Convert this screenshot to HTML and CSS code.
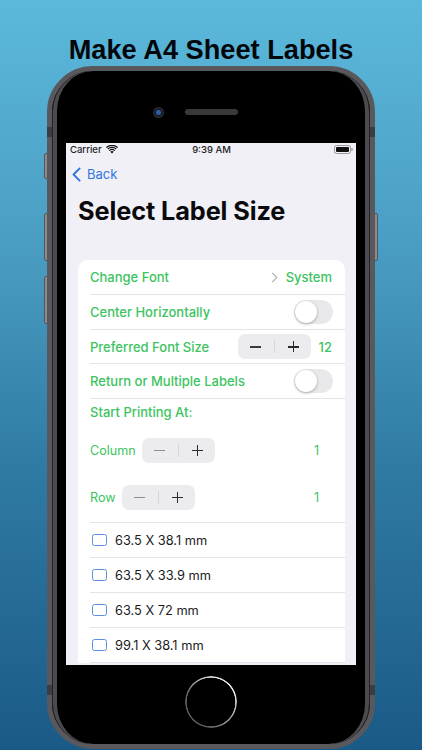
FILE: index.html
```html
<!DOCTYPE html>
<html lang="en">
<head>
<meta charset="utf-8">
<title>Make A4 Sheet Labels</title>
<link rel="stylesheet" href="styles.css">
</head>
<body>
<h1 class="headline">Make A4 Sheet Labels</h1>
<div class="phone">
  <span class="btn btn-mute"></span>
  <span class="btn btn-up"></span>
  <span class="btn btn-down"></span>
  <span class="btn btn-power"></span>
  <span class="band band-tl"></span>
  <span class="band band-tr"></span>
  <span class="band band-bl"></span>
  <span class="band band-br"></span>
  <div class="bezel-top">
    <span class="camera"></span>
    <span class="speaker"></span>
  </div>
  <main class="screen">
    <div class="status">
      <div class="status-left">
        <span>Carrier</span>
        <svg class="wifi" viewBox="0 0 12 9" width="12" height="9"><path d="M6 8.6 4.3 6.7a2.5 2.5 0 0 1 3.4 0z" fill="#111"/><path d="M2.9 5.2a4.6 4.6 0 0 1 6.2 0l-.8.9a3.4 3.4 0 0 0-4.6 0z" fill="#111"/><path d="M1.4 3.6a6.8 6.8 0 0 1 9.2 0l-.8.9a5.6 5.6 0 0 0-7.6 0z" fill="#111"/><path d="M0 2.1a8.9 8.9 0 0 1 12 0l-.8.9a7.8 7.8 0 0 0-10.4 0z" fill="#111"/></svg>
      </div>
      <span class="status-time">9:39 AM</span>
      <div class="status-right">
        <svg viewBox="0 0 19 9" width="19" height="9"><rect x=".5" y=".5" width="16" height="8" rx="2" fill="none" stroke="#999"/><rect x="2" y="2" width="13" height="5" rx="1" fill="#111"/><rect x="17.4" y="3" width="1.2" height="3" fill="#999"/></svg>
      </div>
    </div>
    <nav class="navbar">
      <svg class="chevron" viewBox="0 0 10 16" width="9" height="15"><path d="M8.5 1.2 1.7 8l6.8 6.8" fill="none" stroke="#2f75de" stroke-width="2.1" stroke-linecap="round" stroke-linejoin="round"/></svg>
      <span class="back">Back</span>
    </nav>
    <h2 class="title">Select Label Size</h2>
    <section class="card">
      <div class="row row-a">
        <span class="label">Change Font</span>
        <span class="value-group">
          <svg viewBox="0 0 7 12" width="7" height="11"><path d="M1 1l5 5-5 5" fill="none" stroke="#aeaeb2" stroke-width="1.2"/></svg>
          <span class="label">System</span>
        </span>
      </div>
      <div class="row row-b">
        <span class="label">Center Horizontally</span>
        <span class="toggle"><span class="knob"></span></span>
      </div>
      <div class="row row-c">
        <span class="label">Preferred Font Size</span>
        <span class="value-group">
          <span class="stepper"><span class="minus dark"></span><span class="divider"></span><span class="plus"></span></span>
          <span class="label">12</span>
        </span>
      </div>
      <div class="row row-b">
        <span class="label">Return or Multiple Labels</span>
        <span class="toggle"><span class="knob"></span></span>
      </div>
      <div class="row-start">
        <span class="label">Start Printing At:</span>
      </div>
      <div class="row-pos pos-col">
        <span class="label light">Column</span>
        <span class="stepper"><span class="minus"></span><span class="divider"></span><span class="plus"></span></span>
        <span class="label light count">1</span>
      </div>
      <div class="row-pos pos-row">
        <span class="label light">Row</span>
        <span class="stepper"><span class="minus"></span><span class="divider"></span><span class="plus"></span></span>
        <span class="label light count">1</span>
      </div>
      <div class="row size first"><span class="check"></span><span>63.5 X 38.1 mm</span></div>
      <div class="row size"><span class="check"></span><span>63.5 X 33.9 mm</span></div>
      <div class="row size"><span class="check"></span><span>63.5 X 72 mm</span></div>
      <div class="row size"><span class="check"></span><span>99.1 X 38.1 mm</span></div>
    </section>
  </main>
  <div class="bezel-bottom">
    <span class="home"></span>
  </div>
</div>
</body>
</html>
```
FILE: styles.css
```css
* { box-sizing: border-box; }
html, body { height: 100%; }
body {
  margin: 0;
  width: 422px;
  height: 750px;
  overflow: hidden;
  font-family: Inter, "Liberation Sans", sans-serif;
  background: linear-gradient(180deg, #5bb9dc 0%, #4a9dc2 33%, #2f7ba4 62%, #1a5a86 100%);
}
.headline {
  margin: 0;
  height: 66px;
  padding-top: 35px;
  text-align: center;
  font: 700 27.2px/30px "Liberation Sans", Arial, sans-serif;
  color: #03070c;
}
.phone {
  position: relative;
  width: 328px;
  height: 683px;
  margin-left: 47px;
  background: #000;
  border: 5px solid #59595d;
  border-radius: 46px;
  display: flex;
  flex-direction: column;
  align-items: center;
}
.phone::before, .phone::after {
  content: "";
  position: absolute;
  top: 0;
  bottom: 0;
  pointer-events: none;
}
.phone::before {
  left: 0;
  right: 0;
  border: solid #232325;
  border-width: 0 1px;
  border-radius: 41px;
}
.phone::after {
  left: 1px;
  right: 1px;
  border: solid #4c4c50;
  border-width: 0 4px;
  border-radius: 40px;
}
.btn { position: absolute; width: 4px; background: #8b8b90; border: 1px solid #55555a; }
.btn-mute { left: -8px; top: 82px; height: 26px; border-radius: 2px 0 0 2px; }
.btn-up { left: -8px; top: 142px; height: 48px; border-radius: 2px 0 0 2px; }
.btn-down { left: -8px; top: 205px; height: 48px; border-radius: 2px 0 0 2px; }
.btn-power { right: -8px; top: 142px; height: 48px; border-radius: 0 2px 2px 0; }
.band { position: absolute; width: 5px; height: 10px; background: #3d3d41; }
.band-tl { left: -5px; top: 56px; }
.band-tr { right: -5px; top: 56px; }
.band-bl { left: -5px; top: 614px; }
.band-br { right: -5px; top: 614px; }
.bezel-top {
  flex: none;
  height: 72px;
  width: 100%;
  display: flex;
  align-items: flex-start;
  padding: 36px 0 0 101px;
  gap: 21px;
}
.camera {
  width: 11px;
  height: 11px;
  border-radius: 50%;
  background: radial-gradient(circle at 50% 50%, #2f5fa8 0 2px, #141a26 3px, #2b2d33 5.5px);
}
.speaker {
  width: 53px;
  height: 6px;
  margin-top: 2px;
  border-radius: 3px;
  background: #39393c;
}
.screen {
  flex: none;
  width: 290px;
  height: 522px;
  background: #f0f0f6;
  overflow: hidden;
  color: #111;
}
.status {
  height: 13px;
  padding: 0 3px 0 4px;
  display: grid;
  grid-template-columns: 1fr auto 1fr;
  align-items: center;
  font-size: 9.5px;
  font-weight: 500;
  color: #222;
}
.status-left { display: flex; align-items: center; gap: 4px; }
.status-right { display: flex; justify-content: flex-end; }
.navbar { height: 36px; padding-left: 6px; display: flex; align-items: center; gap: 6px; }
.back { font-size: 13px; color: #2f75de; }
.title {
  margin: 0;
  padding: 3px 0 0 12px;
  height: 68px;
  font-size: 25.3px;
  line-height: 31px;
  font-weight: 700;
  color: #0a0a0c;
  letter-spacing: -.1px;
}
.card {
  width: 267px;
  margin-left: 12px;
  background: #fff;
  border-radius: 10px 10px 0 0;
  padding-left: 12px;
  font-size: 13px;
}
.label { color: #3cc45f; font-weight: 500; font-size: 13px; white-space: nowrap; }
.label.light { font-weight: 400; font-size: 12.6px; }
.row {
  display: flex;
  align-items: center;
  justify-content: space-between;
  padding-right: 12px;
  border-bottom: 1px solid #e4e4e8;
}
.row-a { height: 35px; }
.row-b { height: 35px; }
.row-c { height: 34px; }
.value-group { display: flex; align-items: center; gap: 8px; margin-right: 1px; }
.toggle {
  width: 39px;
  height: 24px;
  border-radius: 12px;
  background: #e9e9eb;
  padding: 1px;
}
.knob {
  display: block;
  width: 22px;
  height: 22px;
  border-radius: 50%;
  background: #fff;
  box-shadow: 0 1px 3px rgba(0,0,0,.3);
}
.stepper {
  width: 73px;
  height: 25px;
  border-radius: 7px;
  background: #ececee;
  display: flex;
  align-items: center;
  justify-content: center;
  flex: none;
}
.divider { width: 1px; height: 13px; background: #d6d6d9; margin: 0 10px; }
.minus, .plus { position: relative; width: 11px; height: 11px; display: block; margin: 0 3px; }
.minus::before, .plus::before, .plus::after { content: ""; position: absolute; background: #2a2a2c; }
.minus::before { left: 0; right: 0; top: 5px; height: 1.5px; background: #8e8e93; }
.minus.dark::before { background: #3a3a3c; }
.plus::before { left: 0; right: 0; top: 5px; height: 1.5px; }
.plus::after { top: 0; bottom: 0; left: 5px; width: 1.5px; }
.row-start { height: 25px; display: flex; align-items: center; }
.row-pos { display: flex; align-items: center; gap: 6px; padding-right: 26px; }
.pos-col { height: 52px; }
.pos-row { height: 47px; padding-bottom: 4px; border-bottom: 1px solid #e4e4e8; }
.count { margin-left: auto; }
.size {
  height: 35px;
  justify-content: flex-start;
  gap: 8px;
  font-size: 12.8px;
  color: #1c1c1e;
}
.check {
  width: 15px;
  height: 12.5px;
  margin-left: 2px;
  border: 1.6px solid #5b8fdf;
  border-radius: 2.5px;
  flex: none;
}
.bezel-bottom {
  flex: 1;
  width: 100%;
  display: flex;
  justify-content: center;
  padding-top: 11px;
}
.home {
  width: 52px;
  height: 52px;
  border-radius: 50%;
  background: conic-gradient(from 0deg, #ddd, #f0f0f0 70deg, #999 130deg, #555 200deg, #666 290deg, #ddd);
  -webkit-mask: radial-gradient(circle, transparent 24px, #000 24.6px);
  mask: radial-gradient(circle, transparent 24px, #000 24.6px);
}
```
